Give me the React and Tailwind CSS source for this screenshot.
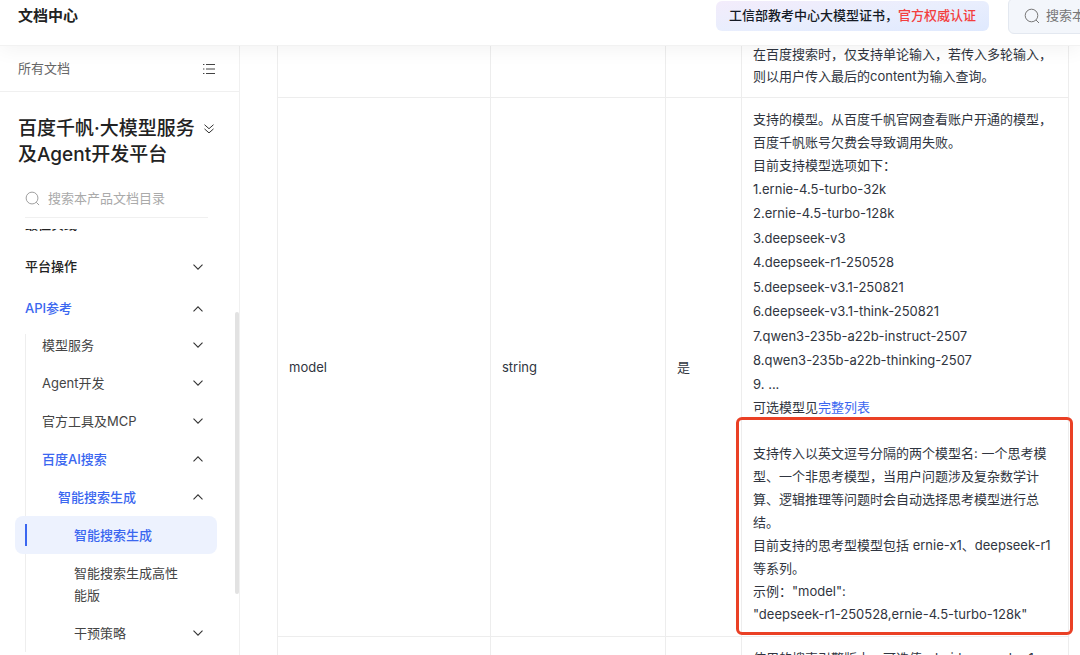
import React, { useState } from "react";

const MODELS = [
  "1.ernie-4.5-turbo-32k",
  "2.ernie-4.5-turbo-128k",
  "3.deepseek-v3",
  "4.deepseek-r1-250528",
  "5.deepseek-v3.1-250821",
  "6.deepseek-v3.1-think-250821",
  "7.qwen3-235b-a22b-instruct-2507",
  "8.qwen3-235b-a22b-thinking-2507",
];

const SUB_ITEMS = [
  { label: "模型服务", indent: "pl-[42px]" },
  { label: "Agent开发", indent: "pl-[42px]" },
  { label: "官方工具及MCP", indent: "pl-[42px]" },
  { label: "百度AI搜索", indent: "pl-[42px]", open: true },
  { label: "智能搜索生成", indent: "pl-[58px]", open: true },
  { label: "智能搜索生成", indent: "pl-[59px]", leaf: true, active: true },
  { label: "智能搜索生成高性能版", indent: "pl-[74px]", leaf: true },
  { label: "干预策略", indent: "pl-[74px]" },
];

function Chevron({ open }) {
  return (
    <svg viewBox="0 0 10 6" className="w-2.5 h-1.5 shrink-0 text-[#333]" fill="none" stroke="currentColor" aria-hidden="true">
      <path d={open ? "M0.5 5.3 5 0.8l4.5 4.5" : "M0.5 0.7 5 5.2 9.5 0.7"} strokeWidth="1.1" />
    </svg>
  );
}

function SearchIcon({ className }) {
  return (
    <svg viewBox="0 0 16 16" className={className} fill="none" stroke="currentColor" aria-hidden="true">
      <circle cx="7.5" cy="7.5" r="6.3" />
      <path d="M12 12l3 3" />
    </svg>
  );
}

function Header() {
  return (
    <header className="relative z-10 flex items-center h-[46px] pl-[18px] pb-[13px] shrink-0 bg-white border-b border-[#f2f2f2] shadow-[0_4px_20px_rgba(0,0,0,0.05)]">
      <h1 className="text-[15px] font-bold text-[#222]">文档中心</h1>
      <a
        href="#cert"
        className="ml-auto flex items-center h-[30px] px-[13px] shrink-0 rounded-md bg-gradient-to-br from-[#f3ecfb] via-[#e9eefd] to-[#dfe9fe] text-[13px] font-medium text-[#151b26]"
      >
        工信部教考中心大模型证书，<span className="text-[#f33e3e]">官方权威认证</span>
      </a>
      <label className="flex items-center gap-[6px] ml-[19px] -mr-[128px] w-[200px] h-9 pl-[15px] shrink-0 rounded-md border border-[#e3e8f0] bg-[#f3f6fb]">
        <SearchIcon className="size-4 shrink-0 text-[#777]" />
        <input
          type="text"
          aria-label="搜索"
          placeholder="搜索本产品文档"
          className="w-full bg-transparent text-[13px] outline-none placeholder:text-[#777]"
        />
      </label>
    </header>
  );
}

function TopItem({ label, open, active, onClick }) {
  return (
    <button
      type="button"
      onClick={onClick}
      className={`flex items-center justify-between w-full h-[34px] pl-[25px] pr-9 text-[13px] font-medium ${
        active ? "text-[#3b67f0]" : "text-[#222]"
      }`}
    >
      {label}
      <Chevron open={open} />
    </button>
  );
}

function SubItem({ item }) {
  if (item.active) {
    return (
      <a
        href="#current"
        className={`relative flex items-center ml-[15px] mr-[22px] py-2 rounded-lg bg-[#edf2fe] text-[13px] leading-[22px] font-medium text-[#3b67f0] ${item.indent}`}
      >
        <span className="absolute left-[10px] top-2 bottom-2 w-0.5 bg-[#3b67f0]" />
        {item.label}
      </a>
    );
  }
  if (item.leaf) {
    return (
      <a href="#page" className={`block pr-[54px] py-2 text-[13px] leading-[22px] text-[#444] ${item.indent}`}>
        {item.label}
      </a>
    );
  }
  return (
    <button
      type="button"
      className={`flex items-center justify-between w-full pr-9 py-2 text-[13px] leading-[22px] ${
        item.open ? "font-medium text-[#3b67f0]" : "text-[#444]"
      } ${item.indent}`}
    >
      {item.label}
      <Chevron open={item.open} />
    </button>
  );
}

function Sidebar() {
  const [apiOpen, setApiOpen] = useState(true);

  return (
    <aside className="relative flex flex-col w-60 shrink-0 border-r border-[#f0f0f0] overflow-hidden">
      <div className="flex items-center justify-between h-[46px] pl-[18px] pr-6 shrink-0 border-b border-[#f0f0f0]">
        <a href="#all" className="text-[13px] text-[#666]">所有文档</a>
        <button type="button" aria-label="目录">
          <svg viewBox="0 0 12 12" className="size-3 text-[#444]" fill="none" stroke="currentColor">
            <path d="M3 1.5h9M3 6h9M3 10.5h9" />
            <path d="M0 1.5h1.4M0 6h1.4M0 10.5h1.4" />
          </svg>
        </button>
      </div>

      <div className="flex items-start justify-between pl-[18px] pr-[25px] pt-6 shrink-0">
        <h2 className="text-[19px] leading-[26px] font-medium text-[#222] whitespace-nowrap">
          百度千帆·大模型服务
          <br />
          及Agent开发平台
        </h2>
        <button type="button" aria-label="切换产品" className="mt-2">
          <svg viewBox="0 0 10 10" className="size-2.5 text-[#333]" fill="none" stroke="currentColor">
            <path d="M0.5 0.7 5 4.7l4.5-4M0.5 4.9 5 8.9l4.5-4" />
          </svg>
        </button>
      </div>

      <label className="flex items-center gap-2 ml-[25px] mr-[31px] mt-3 h-[38px] shrink-0 border-b border-[#f0f0f0]">
        <SearchIcon className="size-[15px] shrink-0 text-[#999]" />
        <input
          type="text"
          aria-label="搜索本产品文档目录"
          placeholder="搜索本产品文档目录"
          className="w-full bg-transparent text-[13px] outline-none placeholder:text-[#aaa]"
        />
      </label>

      {/* Menu, scrolled down a little */}
      <nav className="relative mt-[11px] flex-1 min-h-0 overflow-hidden">
        <div className="-mt-[21px] flex flex-col gap-2">
          <TopItem label="最佳实践" />
          <TopItem label="平台操作" />
          <div>
            <TopItem label="API参考" open={apiOpen} active onClick={() => setApiOpen(!apiOpen)} />
            {apiOpen && (
              <div className="relative">
                <span className="absolute left-[25px] top-2 bottom-0 w-px bg-[#eee]" />
                {SUB_ITEMS.map((item, idx) => (
                  <SubItem key={idx} item={item} />
                ))}
              </div>
            )}
          </div>
        </div>
        <span className="absolute right-0 top-[83px] w-1 h-[282px] rounded-sm bg-[#e2e2e2]" />
      </nav>
    </aside>
  );
}

function ParamTable() {
  const cell = "border border-[#ededed] px-[11px] py-2.5";

  return (
    <table className="-mt-[14px] w-full table-fixed border-collapse text-[13px] leading-[23px] text-[#303540]">
      <colgroup>
        <col className="w-[213px]" />
        <col className="w-[175px]" />
        <col className="w-[76px]" />
        <col />
      </colgroup>
      <tbody>
        <tr>
          <td className={cell} />
          <td className={cell} />
          <td className={cell} />
          <td className={`${cell} leading-[22px]`}>
            在百度搜索时，仅支持单论输入，若传入多轮输入，则以用户传入最后的content为输入查询。
          </td>
        </tr>
        <tr>
          <td className={cell}>model</td>
          <td className={cell}>string</td>
          <td className={cell}>是</td>
          <td className={cell}>
            <p>支持的模型。从百度千帆官网查看账户开通的模型，百度千帆账号欠费会导致调用失败。</p>
            <p>目前支持模型选项如下：</p>
            <ul className="grid h-49 items-center">
              {MODELS.map((m) => (
                <li key={m}>{m}</li>
              ))}
            </ul>
            <p>9. ...</p>
            <p>
              可选模型见<a href="#models" className="text-[#3b67f0]">完整列表</a>
            </p>
            <div className="relative pt-[23px]">
              <span className="absolute -top-0.5 -bottom-[9px] -left-[17px] -right-4 border-3 border-[#ea4025] rounded-md pointer-events-none" />
              <p>支持传入以英文逗号分隔的两个模型名: 一个思考模型、一个非思考模型，当用户问题涉及复杂数学计算、逻辑推理等问题时会自动选择思考模型进行总结。</p>
              <p>目前支持的思考型模型包括 ernie-x1、deepseek-r1等系列。</p>
              <p>
                示例："model":
                <br />
                "deepseek-r1-250528,ernie-4.5-turbo-128k"
              </p>
            </div>
          </td>
        </tr>
        <tr>
          <td className={cell} />
          <td className={cell} />
          <td className={cell} />
          <td className={cell}>使用的搜索引擎版本。可选值：baidu_search_v1、baidu_search_v2</td>
        </tr>
      </tbody>
    </table>
  );
}

export default function App() {
  return (
    <div className="flex flex-col h-screen overflow-hidden bg-white font-['Inter','Noto_Sans_CJK_SC',sans-serif]">
      <Header />
      <div className="flex flex-1 min-h-0">
        <Sidebar />
        <main className="flex-1 min-w-0 pl-[37px] pr-[11px] overflow-hidden">
          <ParamTable />
        </main>
      </div>
    </div>
  );
}
